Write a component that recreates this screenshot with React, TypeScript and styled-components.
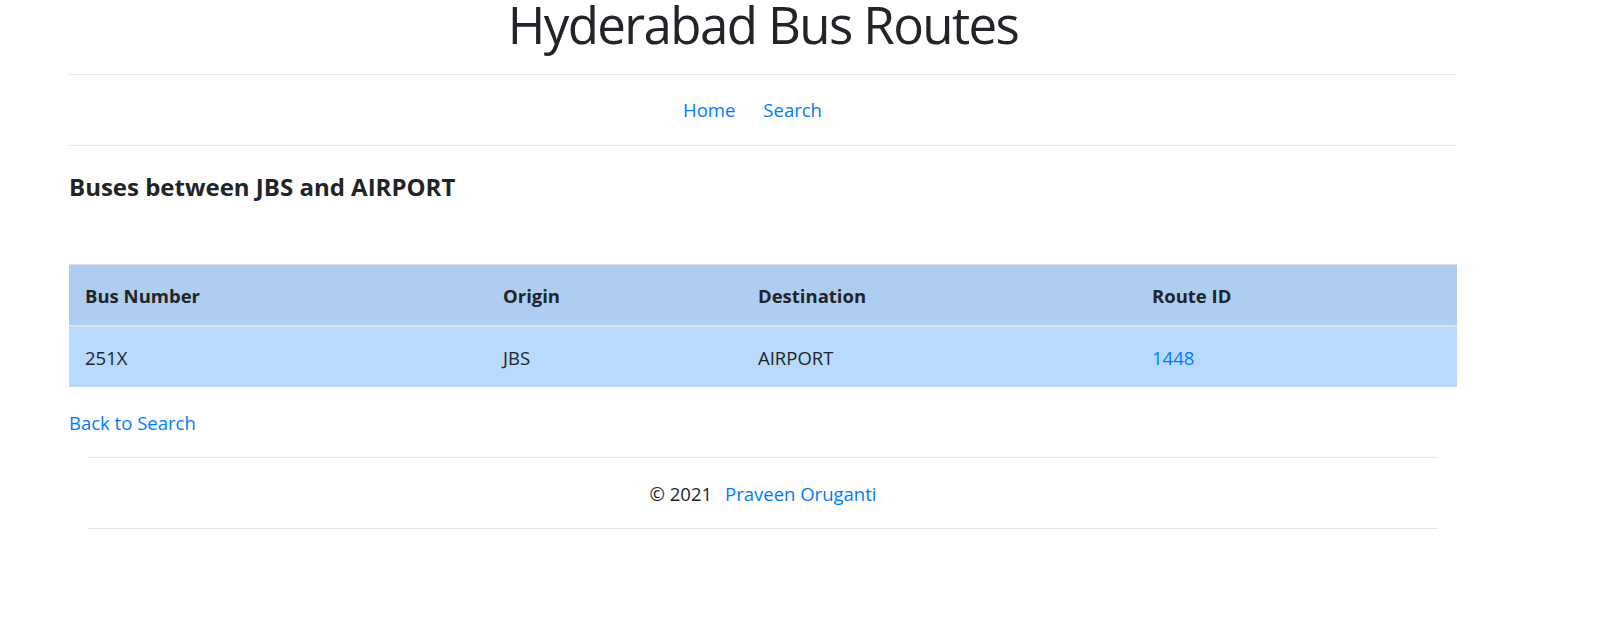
import React from "react";
import styled, { createGlobalStyle } from "styled-components";

const Global = createGlobalStyle`
  html, body { margin: 0; padding: 0; background: #ffffff; }
  body {
    font-family: "Open Sans", "Noto Sans", Arial, sans-serif;
    color: #212529;
    font-size: 18.5px;
  }
  * { box-sizing: border-box; }
`;

const Container = styled.div`
  width: 1388px;
  margin-left: 69px;
`;

const Title = styled.h1`
  margin: 0;
  font-size: 51px;
  line-height: 48px;
  letter-spacing: -1.6px;
  font-weight: 500;
  text-align: center;
  color: #212529;
`;

const Rule = styled.hr<{ $top?: number }>`
  margin: ${(p) => p.$top ?? 0}px 0 0 0;
  border: 0;
  border-top: 1px solid #e6e6e6;
  height: 0;
`;

const Nav = styled.nav`
  display: flex;
  justify-content: center;
  gap: 28px;
  padding: 23px 21px 23px 0;
  line-height: 24px;
`;

const Link = styled.a`
  color: #007bff;
  text-decoration: none;
  cursor: pointer;
`;

const Heading = styled.h4`
  margin: 26px 0 0 0;
  font-size: 24px;
  line-height: 29px;
  font-weight: 700;
`;

const Table = styled.table`
  margin-top: 63px;
  width: 100%;
  border-collapse: collapse;
  table-layout: fixed;
  border-top: 1px solid #dee2e6;
`;

const HeadCell = styled.th`
  background: #aecef1;
  text-align: left;
  font-weight: 700;
  padding: 19px 16px 17px 16px;
  line-height: 24px;
  border-bottom: 2px solid #dee2e6;
`;

const Cell = styled.td`
  background: #b8daff;
  padding: 19px 16px 17px 16px;
  line-height: 24px;
`;

const BackRow = styled.div`
  margin-top: 24px;
  line-height: 24px;
`;

const Footer = styled.footer`
  padding: 0 19px 0 19px;
  margin-top: 22px;
`;

const FooterText = styled.p`
  margin: 0;
  padding: 24px 0 22px 0;
  line-height: 24px;
  text-align: center;
`;

const FooterLink = styled(Link)`
  margin-left: 13px;
`;

const columns = [
  { label: "Bus Number", width: 418 },
  { label: "Origin", width: 255 },
  { label: "Destination", width: 394 },
  { label: "Route ID", width: 321 },
];

export default function App() {
  return (
    <>
      <Global />
      <Container>
        <Title>Hyderabad Bus Routes</Title>
        <Rule $top={26} />
        <Nav>
          <Link>Home</Link>
          <Link>Search</Link>
        </Nav>
        <Rule />
        <Heading>Buses between JBS and AIRPORT</Heading>
        <Table>
          <colgroup>
            {columns.map((c) => (
              <col key={c.label} style={{ width: c.width }} />
            ))}
          </colgroup>
          <thead>
            <tr>
              {columns.map((c) => (
                <HeadCell key={c.label}>{c.label}</HeadCell>
              ))}
            </tr>
          </thead>
          <tbody>
            <tr>
              <Cell>251X</Cell>
              <Cell>JBS</Cell>
              <Cell>AIRPORT</Cell>
              <Cell>
                <Link>1448</Link>
              </Cell>
            </tr>
          </tbody>
        </Table>
        <BackRow>
          <Link>Back to Search</Link>
        </BackRow>
        <Footer>
          <Rule />
          <FooterText>
            © 2021<FooterLink>Praveen Oruganti</FooterLink>
          </FooterText>
          <Rule />
        </Footer>
      </Container>
    </>
  );
}
